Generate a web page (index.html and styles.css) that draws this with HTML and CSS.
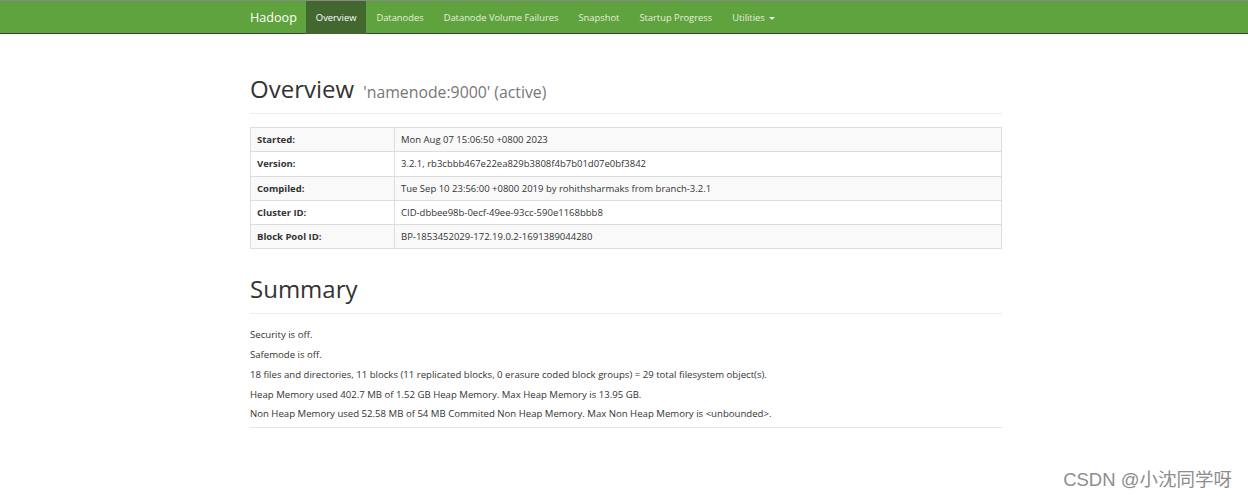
FILE: index.html
```html
<!DOCTYPE html>
<html>
<head>
<meta charset="utf-8">
<title>Namenode information</title>
<link rel="stylesheet" href="styles.css">
</head>
<body>
<header class="navbar">
  <nav class="nav-inner">
    <a class="brand" href="#">Hadoop</a>
    <ul class="nav">
      <li class="active"><a href="#">Overview</a></li>
      <li><a href="#">Datanodes</a></li>
      <li><a href="#">Datanode Volume Failures</a></li>
      <li><a href="#">Snapshot</a></li>
      <li><a href="#">Startup Progress</a></li>
      <li><a href="#">Utilities <span class="caret"></span></a></li>
    </ul>
  </nav>
</header>
<main class="container">
  <div class="page-header first">
    <h1>Overview <small>'namenode:9000' (active)</small></h1>
  </div>
  <table class="info">
    <tr><th>Started:</th><td>Mon Aug 07 15:06:50 +0800 2023</td></tr>
    <tr><th>Version:</th><td>3.2.1, rb3cbbb467e22ea829b3808f4b7b01d07e0bf3842</td></tr>
    <tr><th>Compiled:</th><td>Tue Sep 10 23:56:00 +0800 2019 by rohithsharmaks from branch-3.2.1</td></tr>
    <tr><th>Cluster ID:</th><td>CID-dbbee98b-0ecf-49ee-93cc-590e1168bbb8</td></tr>
    <tr><th>Block Pool ID:</th><td>BP-1853452029-172.19.0.2-1691389044280</td></tr>
  </table>
  <div class="page-header second">
    <h1>Summary</h1>
  </div>
  <div class="summary">
    <p>Security is off.</p>
    <p>Safemode is off.</p>
    <p>18 files and directories, 11 blocks (11 replicated blocks, 0 erasure coded block groups) = 29 total filesystem object(s).</p>
    <p>Heap Memory used 402.7 MB of 1.52 GB Heap Memory. Max Heap Memory is 13.95 GB.</p>
    <p>Non Heap Memory used 52.58 MB of 54 MB Commited Non Heap Memory. Max Non Heap Memory is &lt;unbounded&gt;.</p>
  </div>
</main>
<div class="watermark">CSDN @小沈同学呀</div>
</body>
</html>
```
FILE: styles.css
```css
html, body {
  margin: 0;
  padding: 0;
  background: #fff;
}
body {
  font-family: "Open Sans", "Noto Sans", sans-serif;
  font-size: 9.6px;
  color: #333;
  height: 497px;
  overflow: hidden;
  position: relative;
}
a { text-decoration: none; }

.navbar {
  height: 32px;
  background: #5fa33e;
  border-top: 1px solid #8a8a8a;
  border-bottom: 1px solid #2f4a24;
}
.nav-inner {
  display: flex;
  align-items: stretch;
  height: 32px;
  margin-left: 250px;
}
.brand {
  color: #fff;
  font-size: 12.6px;
  line-height: 33px;
  padding-right: 9px;
}
.nav {
  display: flex;
  list-style: none;
  margin: 0;
  padding: 0;
}
.nav li a {
  display: block;
  color: #e6eedd;
  font-size: 9.35px;
  line-height: 33px;
  padding: 0 10px;
}
.nav li.active a {
  background: #42672f;
  color: #fff;
}
.caret {
  display: inline-block;
  width: 0;
  height: 0;
  margin-left: 2px;
  vertical-align: middle;
  border-top: 3px solid #e6eedd;
  border-left: 3px solid transparent;
  border-right: 3px solid transparent;
}

.container {
  width: 752px;
  margin-left: 250px;
}
.page-header {
  border-bottom: 1px solid #eee;
  margin-bottom: 13px;
}
.page-header.first {
  margin-top: 40px;
  padding-bottom: 6px;
}
.page-header.second {
  padding-bottom: 9px;
}
.page-header h1 {
  margin: 0;
  font-weight: 400;
  font-size: 24px;
  line-height: 30px;
  color: #333;
}
.page-header h1 small {
  font-size: 15.8px;
  color: #777;
  margin-left: 3px;
}
.info {
  width: 100%;
  border-collapse: collapse;
  border: 1px solid #ddd;
  margin-bottom: 25px;
}
.info th, .info td {
  border: 1px solid #ddd;
  text-align: left;
  padding: 5px 6px;
  line-height: 13.3px;
  font-size: 9.5px;
}
.info th {
  width: 131px;
  font-weight: 700;
}
.info tr:nth-child(odd) {
  background: #f9f9f9;
}
.summary {
  border-bottom: 1px solid #e5e5e5;
  padding-bottom: 3px;
  margin-top: -2px;
}
.summary p {
  margin: 0;
  line-height: 19.75px;
}
.watermark {
  position: absolute;
  right: 16px;
  top: 465px;
  font-family: "Liberation Sans", "Noto Sans CJK SC", sans-serif;
  font-size: 18.5px;
  color: #8d8d8d;
  text-shadow: 0 0 1px #fff;
}
```
